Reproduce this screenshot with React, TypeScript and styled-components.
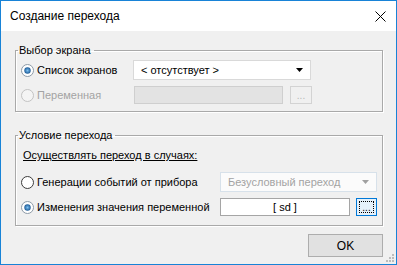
import React from "react";
import styled, { createGlobalStyle } from "styled-components";

const Global = createGlobalStyle`
  html, body { margin: 0; padding: 0; background: #ffffff; }
  * { box-sizing: border-box; }
`;

const Window = styled.div`
  position: relative;
  width: 397px;
  height: 265px;
  border: 1px solid #1883d7;
  display: flex;
  flex-direction: column;
  font-family: "Liberation Sans", Arial, sans-serif;
  font-size: 11px;
  color: #000;
`;

const TitleBar = styled.div`
  height: 30px;
  flex: none;
  background: #ffffff;
  display: flex;
  align-items: center;
  justify-content: space-between;
  padding: 0 10px 0 9px;
`;

const Title = styled.span`
  font-size: 12px;
  line-height: 15px;
  margin-top: 1px;
`;

const Body = styled.div`
  flex: 1;
  background: #f0f0f0;
  padding: 13px 13px 0 14px;
  display: flex;
  flex-direction: column;
`;

const Group = styled.fieldset<{ $gapTop?: number }>`
  margin: ${(p) => p.$gapTop ?? 0}px 0 0 0;
  padding: 0;
  min-width: 0;
  width: 368px;
  border: 1px solid #a9a9a9;
  box-shadow: inset 1px 1px 0 #ffffff, 1px 1px 0 #ffffff;
`;

const Legend = styled.legend`
  margin-left: 2px;
  padding: 0 3px 0 1px;
  line-height: 13px;
  font-size: 11px;
`;

const Content = styled.div<{ $pt: number; $pb: number; $gap: number }>`
  display: flex;
  flex-direction: column;
  gap: ${(p) => p.$gap}px;
  padding: ${(p) => p.$pt}px 0 ${(p) => p.$pb}px 5px;
`;

const Row = styled.div`
  display: flex;
  align-items: center;
`;

const Choice = styled.label<{ $w: number; $disabled?: boolean }>`
  width: ${(p) => p.$w}px;
  flex: none;
  display: flex;
  align-items: center;
  gap: 3px;
  line-height: 13px;
  color: ${(p) => (p.$disabled ? "#a3a3a3" : "#000")};
`;

const Caption = styled.div`
  margin-left: 2px;
  line-height: 13px;
  text-decoration: underline;
`;

const Combo = styled.div<{ $w: number; $disabled?: boolean }>`
  width: ${(p) => p.$w}px;
  height: 20px;
  display: flex;
  align-items: center;
  justify-content: space-between;
  padding: 0 6px 0 7px;
  background: ${(p) => (p.$disabled ? "#fbfbfb" : "#ffffff")};
  border: 1px solid ${(p) => (p.$disabled ? "#d7e1ea" : "#d9d9d9")};
  color: ${(p) => (p.$disabled ? "#a3a3a3" : "#000")};
`;

const Field = styled.div<{ $w: number; $disabled?: boolean }>`
  width: ${(p) => p.$w}px;
  height: 18px;
  display: flex;
  align-items: center;
  justify-content: center;
  background: ${(p) => (p.$disabled ? "#e3e3e3" : "#ffffff")};
  border: 1px solid ${(p) => (p.$disabled ? "#cfcfcf" : "#a5a5a5")};
`;

const DotsButton = styled.div<{ $w: number; $focused?: boolean; $disabled?: boolean }>`
  position: relative;
  width: ${(p) => p.$w}px;
  height: 18px;
  margin-left: ${(p) => (p.$focused ? 6 : 7)}px;
  display: flex;
  align-items: center;
  justify-content: center;
  font-size: 10px;
  line-height: 10px;
  padding-top: 2px;
  background: ${(p) => (p.$focused ? "#e5f1fb" : "#f0f0f0")};
  border: 1px solid ${(p) => (p.$focused ? "#0078d7" : "#d3d3d3")};
  color: ${(p) => (p.$disabled ? "#b8b8b8" : "#000")};
`;

const FocusRect = styled.span`
  position: absolute;
  inset: 2px;
  border: 1px dotted #000;
`;

const Footer = styled.div`
  display: flex;
  justify-content: flex-end;
  margin-top: 8px;
  padding-right: 0;
`;

const Button = styled.div`
  width: 75px;
  height: 23px;
  display: flex;
  align-items: center;
  justify-content: center;
  background: #e1e1e1;
  border: 1px solid #adadad;
  font-size: 12px;
`;

const Grip = styled.svg`
  position: absolute;
  right: 2px;
  bottom: 2px;
`;

const Radio = ({ checked, disabled }: { checked?: boolean; disabled?: boolean }) => (
  <svg width="13" height="13" viewBox="0 0 13 13">
    <defs>
      <radialGradient id="rg" cx="0.5" cy="0.5" r="0.5">
        <stop offset="0" stopColor="#7bc0f2" />
        <stop offset="1" stopColor="#1c5a96" />
      </radialGradient>
    </defs>
    <circle
      cx="6.5"
      cy="6.5"
      r="6"
      fill={disabled ? "#f4f4f4" : "#ffffff"}
      stroke={disabled ? "#c2c2c2" : checked ? "#8d9aa6" : "#3c3c3c"}
      strokeWidth="1"
    />
    {checked && <circle cx="6.5" cy="6.5" r="3.2" fill="url(#rg)" />}
  </svg>
);

const Arrow = ({ color }: { color: string }) => (
  <svg width="8" height="5" viewBox="0 0 8 5">
    <path d="M0 0 H7 L3.5 4 Z" fill={color} />
  </svg>
);

export default function App() {
  return (
    <>
      <Global />
      <Window>
        <TitleBar>
          <Title>Создание перехода</Title>
          <svg width="11" height="11" viewBox="0 0 11 11">
            <path d="M0.5 0.5 L10.5 10.5 M10.5 0.5 L0.5 10.5" stroke="#000" strokeWidth="1" />
          </svg>
        </TitleBar>
        <Body>
          <Group>
            <Legend>Выбор экрана</Legend>
            <Content $pt={3} $pb={7} $gap={6}>
              <Row>
                <Choice $w={112}>
                  <Radio checked />
                  Список экранов
                </Choice>
                <Combo $w={178}>
                  <span>&lt; отсутствует &gt;</span>
                  <Arrow color="#000" />
                </Combo>
              </Row>
              <Row>
                <Choice $w={113} $disabled>
                  <Radio disabled />
                  Переменная
                </Choice>
                <Field $w={149} $disabled />
                <DotsButton $w={22} $disabled>
                  ...
                </DotsButton>
              </Row>
            </Content>
          </Group>
          <Group $gapTop={17}>
            <Legend>Условие перехода</Legend>
            <Content $pt={7} $pb={9} $gap={0}>
              <Caption>Осуществлять переход в случаях:</Caption>
              <Row style={{ marginTop: 10 }}>
                <Choice $w={199}>
                  <Radio />
                  Генерации событий от прибора
                </Choice>
                <Combo $w={157} $disabled>
                  <span>Безусловный переход</span>
                  <Arrow color="#a0a0a0" />
                </Combo>
              </Row>
              <Row style={{ marginTop: 6 }}>
                <Choice $w={199}>
                  <Radio checked />
                  Изменения значения переменной
                </Choice>
                <Field $w={130}>[ sd ]</Field>
                <DotsButton $w={21} $focused>
                  <FocusRect />
                  ...
                </DotsButton>
              </Row>
            </Content>
          </Group>
          <Footer>
            <Button>OK</Button>
          </Footer>
        </Body>
        <Grip width="8" height="8" viewBox="0 0 8 8">
          {[
            [6, 0],
            [6, 3],
            [3, 3],
            [6, 6],
            [3, 6],
            [0, 6],
          ].map(([x, y], i) => (
            <rect key={i} x={x} y={y} width="2" height="2" fill="#bcbcbc" />
          ))}
        </Grip>
      </Window>
    </>
  );
}
